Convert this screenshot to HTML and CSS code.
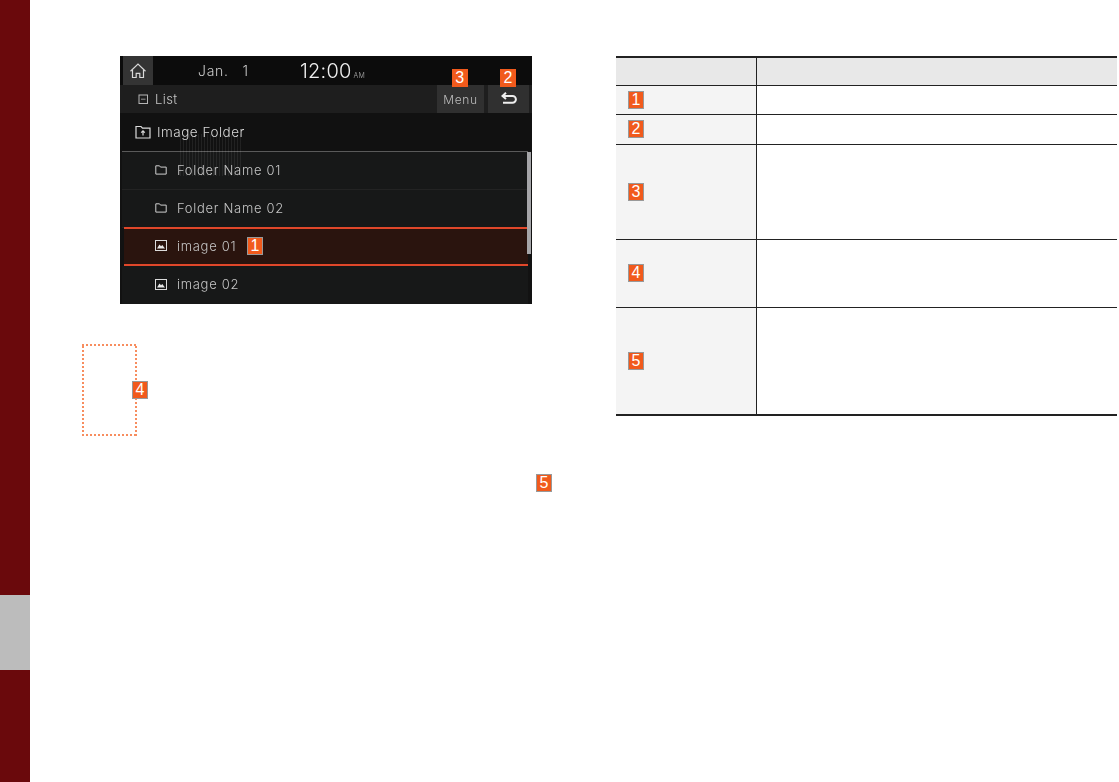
FILE: index.html
```html
<!DOCTYPE html>
<html lang="en">
<head>
    <meta charset="UTF-8">
    <title>Image List</title>
    <link rel="stylesheet" href="styles.css">
</head>
<body>
    <div class="page">
        <!-- Chapter tab strip -->
        <div class="side-strip">
            <div class="strip-red strip-top"></div>
            <div class="strip-grey"></div>
            <div class="strip-red strip-bottom"></div>
        </div>

        <div class="content">
            <div class="left-col">
                <!-- Head unit screen -->
                <div class="screen">
                    <div class="status-bar">
                        <div class="home-btn">
                            <svg width="18" height="18" viewBox="0 0 18 18" fill="none" stroke="#d8d8d8" stroke-width="1.2">
                                <path d="M1.500 9.200 9 2l7.500 7.200"/>
                                <path d="M3.500 8v7.500h3.700v-4.200h3.600v4.200h3.700V8"/>
                            </svg>
                        </div>
                        <span class="date">Jan.&nbsp;&nbsp;&nbsp;1</span>
                        <span class="time">12:00<small>AM</small></span>
                    </div>
                    <div class="sub-bar">
                        <div class="list-title">
                            <svg width="11" height="11" viewBox="0 0 11 11" fill="none" stroke="#b5b5b5">
                                <rect x="1" y="1" width="8.500" height="8.500"/>
                                <path d="M3 5.200h4.500" stroke-width=".8"/>
                            </svg>
                            <span>List</span>
                        </div>
                        <div class="sub-btn menu-btn"><span>Menu</span><span class="badge badge-over">3</span></div>
                        <div class="sub-btn back-btn">
                            <svg width="16" height="14" viewBox="0 0 16 14" fill="none" stroke="#efefef" stroke-width="2">
                                <path d="M5 .8 1.500 3.900 5 7"/>
                                <path d="M2 3.900h9.500a3.300 3.300 0 0 1 0 6.800H2"/>
                            </svg>
                            <span class="badge badge-over">2</span>
                        </div>
                    </div>
                    <div class="folder-head">
                        <svg width="16" height="14" viewBox="0 0 16 14" fill="none" stroke="#dcdcdc" stroke-width="1.200">
                            <path d="M1 1.500h5l1.500 1.700H15v9.800H1z"/>
                            <path d="M8 10.500V6M6.200 7.700 8 5.800l1.800 1.900"/>
                        </svg>
                        <span>Image Folder</span>
                    </div>
                    <div class="file-list">
                        <div class="moire"></div>
                        <div class="scrollbar"></div>
                        <div class="file-row">
                            <svg class="row-icon" width="12" height="10" viewBox="0 0 12 10" fill="none" stroke="#cfcfcf">
                                <path d="M.8.800h3.700l1 1.300h5.700v7H.8z"/>
                            </svg>
                            <span>Folder Name 01</span>
                        </div>
                        <div class="file-row">
                            <svg class="row-icon" width="12" height="10" viewBox="0 0 12 10" fill="none" stroke="#cfcfcf">
                                <path d="M.8.800h3.700l1 1.300h5.700v7H.8z"/>
                            </svg>
                            <span>Folder Name 02</span>
                        </div>
                        <div class="file-row selected">
                            <svg class="row-icon" width="12" height="11" viewBox="0 0 12 11">
                                <rect x=".5" y=".5" width="11" height="10" fill="none" stroke="#dcdcdc"/>
                                <path d="M2 8.500 4.500 4.500 6 6.300 7.300 5 10 8.500z" fill="#e8e8e8"/>
                            </svg>
                            <span>image 01</span>
                            <span class="badge badge-inline">1</span>
                        </div>
                        <div class="file-row last">
                            <svg class="row-icon" width="12" height="11" viewBox="0 0 12 11">
                                <rect x=".5" y=".5" width="11" height="10" fill="none" stroke="#dcdcdc"/>
                                <path d="M2 8.500 4.500 4.500 6 6.300 7.300 5 10 8.500z" fill="#e8e8e8"/>
                            </svg>
                            <span>image 02</span>
                        </div>
                    </div>
                </div>

                <div class="dotted-box"><span class="badge badge-edge">4</span></div>
                <div class="note-line"><span class="badge">5</span></div>
            </div>

            <!-- Description table -->
            <table class="desc-table">
                <tr class="row-head"><th></th><td></td></tr>
                <tr class="row-29"><th><span class="badge">1</span></th><td></td></tr>
                <tr class="row-29"><th><span class="badge">2</span></th><td></td></tr>
                <tr class="row-95"><th><span class="badge">3</span></th><td></td></tr>
                <tr class="row-68"><th><span class="badge">4</span></th><td></td></tr>
                <tr class="row-108"><th><span class="badge">5</span></th><td></td></tr>
            </table>
        </div>
    </div>
</body>
</html>
```

FILE: styles.css
```css
/* Reset and Basic Styles */
* {
    box-sizing: border-box;
    margin: 0;
    padding: 0;
}

body {
    background-color: #ffffff;
    font-family: 'Inter', 'DejaVu Sans', sans-serif;
    height: 782px;
    overflow: hidden;
}

.page {
    display: flex;
    height: 782px;
}

/* Side Strip */
.side-strip {
    width: 30px;
    display: flex;
    flex-direction: column;
}

.strip-red {
    background-color: #6a090c;
}

.strip-top {
    height: 595px;
}

.strip-grey {
    height: 75px;
    background-color: #bcbcbc;
}

.strip-bottom {
    flex: 1;
}

.content {
    flex: 1;
    display: flex;
    align-items: flex-start;
    padding-top: 56px;
}

.left-col {
    width: 586px;
}

/* Number Badges */
.badge {
    display: inline-flex;
    align-items: center;
    justify-content: center;
    width: 16px;
    height: 18px;
    background-color: #f15a1c;
    border: 1px solid #999999;
    color: #ffffff;
    font-family: 'Liberation Sans', sans-serif;
    font-size: 16px;
    line-height: 1;
}

.badge-over {
    position: absolute;
    top: -16px;
    left: 15px;
    border-color: #f15a1c;
}

.badge-inline {
    margin-left: 11px;
}

.badge-edge {
    position: absolute;
    top: 37px;
    left: 50px;
}

/* Screen */
.screen {
    width: 412px;
    height: 248px;
    margin-left: 90px;
    background-color: #121212;
    color: #c4c4c4;
    overflow: hidden;
    font-weight: 300;
}

.screen span,
.screen svg {
    filter: blur(0.35px);
}

.screen .badge {
    filter: none;
    font-weight: 400;
}

.status-bar {
    height: 29px;
    display: flex;
    align-items: center;
    background-color: #0c0c0c;
}

.home-btn {
    width: 30px;
    height: 29px;
    margin-left: 3px;
    display: flex;
    align-items: center;
    justify-content: center;
    background-color: #343434;
}

.date {
    margin-left: 45px;
    width: 102px;
    font-size: 14px;
    letter-spacing: 0.7px;
    color: #c8c8c8;
}

.time {
    font-size: 20px;
    color: #f0f0f0;
    letter-spacing: 0.2px;
}

.time small {
    font-size: 7px;
    color: #a8a8a8;
    margin-left: 2px;
}

.sub-bar {
    height: 28px;
    display: flex;
    align-items: stretch;
    background-color: #1e1e1e;
}

.list-title {
    flex: 1;
    display: flex;
    align-items: center;
    gap: 6px;
    padding-left: 18px;
    font-size: 13px;
    letter-spacing: 0.4px;
}

.sub-btn {
    position: relative;
    display: flex;
    align-items: center;
    justify-content: center;
    background-color: #303030;
}

.menu-btn {
    width: 47px;
    font-size: 12px;
    letter-spacing: 0.6px;
    color: #bcbcbc;
}

.back-btn {
    width: 41px;
    margin-left: 4px;
    margin-right: 3px;
}

.back-btn .badge-over {
    left: 12px;
}

.folder-head {
    height: 38px;
    display: flex;
    align-items: center;
    gap: 6px;
    padding-left: 15px;
    font-size: 13.500px;
    letter-spacing: 0.5px;
    color: #d8d8d8;
    background-color: #111111;
}

.file-list {
    position: relative;
    margin-left: 2px;
    margin-right: 4px;
    border-top: 1px solid #5a5a5a;
    height: 153px;
}

.scrollbar {
    position: absolute;
    top: 0;
    right: -3px;
    width: 4px;
    height: 102px;
    background-color: #a5a5a8;
}

.moire {
    position: absolute;
    top: -18px;
    left: 58px;
    width: 62px;
    height: 42px;
    background-image: repeating-linear-gradient(90deg, rgba(255, 255, 255, 0.07) 0 1px, transparent 1px 3px);
}

.file-row {
    height: 38px;
    display: flex;
    align-items: center;
    padding-left: 33px;
    padding-bottom: 2px;
    font-size: 13px;
    letter-spacing: 0.7px;
    color: #c4c4c4;
    border-bottom: 1px solid #232323;
    background-color: #171818;
}

.row-icon {
    margin-right: 10px;
}

.file-row.selected {
    height: 39px;
    margin-top: -1px;
    margin-left: 2px;
    padding-left: 31px;
    background-color: #2a140e;
    border-top: 2px solid #e0472a;
    border-bottom: 2px solid #e0472a;
}

.file-row.last {
    border-bottom: none;
}

/* Callouts Below the Screen */
.dotted-box {
    position: relative;
    width: 55px;
    height: 92px;
    margin-top: 40px;
    margin-left: 52px;
    background:
        repeating-linear-gradient(90deg, #f78d5f 0 2px, transparent 2px 4px) top / 100% 2px no-repeat,
        repeating-linear-gradient(90deg, #f78d5f 0 2px, transparent 2px 4px) bottom / 100% 2px no-repeat,
        repeating-linear-gradient(0deg, #f78d5f 0 2px, transparent 2px 4px) left / 2px 100% no-repeat,
        repeating-linear-gradient(0deg, #f78d5f 0 2px, transparent 2px 4px) right / 2px 100% no-repeat;
}

.note-line {
    display: flex;
    justify-content: flex-end;
    margin-top: 38px;
    padding-right: 64px;
}

/* Description Table */
.desc-table {
    width: 501px;
    table-layout: fixed;
    border-collapse: collapse;
    border-top: 2px solid #222222;
    border-bottom: 2px solid #222222;
}

.desc-table th,
.desc-table td {
    border-bottom: 1px solid #222222;
    padding: 0;
}

.desc-table th {
    width: 140px;
    padding-left: 12px;
    text-align: left;
    vertical-align: middle;
    background-color: #f4f4f4;
    border-right: 1px solid #222222;
    font-weight: normal;
    line-height: 0;
}

.row-head th,
.row-head td {
    background-color: #e8e8e8;
}

.row-head {
    height: 28px;
}

.row-29 {
    height: 29.500px;
}

.row-95 {
    height: 95px;
}

.row-68 {
    height: 68px;
}

.row-108 {
    height: 108px;
}
```
